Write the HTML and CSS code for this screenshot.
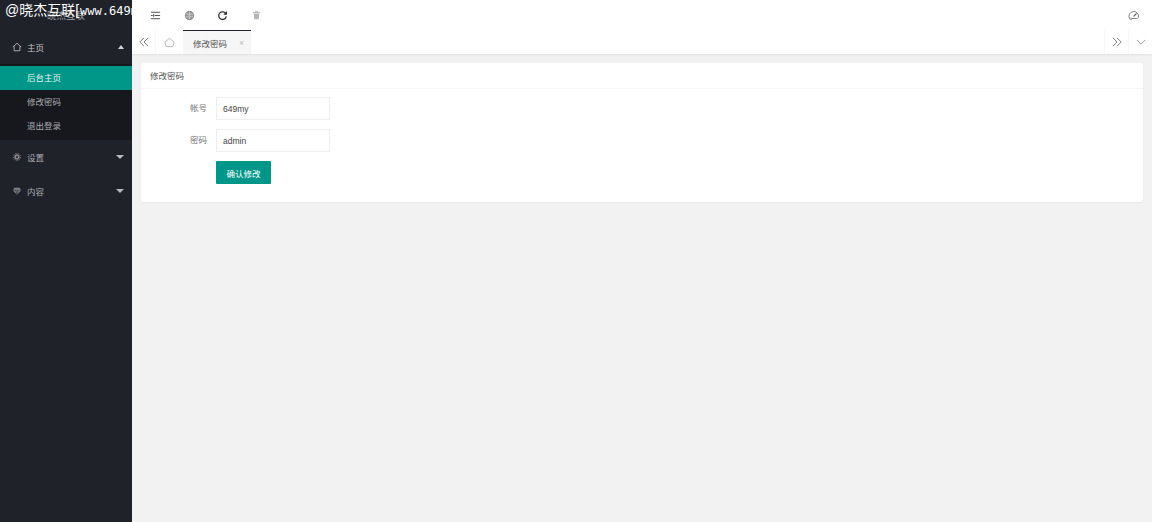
FILE: index.html
```html
<!DOCTYPE html>
<html lang="zh-CN">
<head>
  <meta charset="UTF-8">
  <title>修改密码</title>
  <link rel="stylesheet" href="styles.css">
</head>
<body>
  <aside class="side">
    <div class="logo">晓杰互联</div>
    <div class="watermark">@晓杰互联[<span class="mark-url">www.649m</span></div>
    <ul class="nav">
      <li class="nav-item">
        <svg class="nav-icon" viewBox="0 0 12 12"><path d="M1 6 6 1.500 11 6M2.500 5v5.500h7V5" fill="none" stroke="#c2c2c4" stroke-width="1"/></svg>
        <span>主页</span>
        <i class="arrow up"></i>
      </li>
      <li>
        <ul class="sub">
          <li class="sub-item active">后台主页</li>
          <li class="sub-item">修改密码</li>
          <li class="sub-item">退出登录</li>
        </ul>
      </li>
      <li class="nav-item dim">
        <svg class="nav-icon" viewBox="0 0 12 12"><circle cx="6" cy="6" r="2.200" fill="none" stroke="#85868a" stroke-width="2"/><circle cx="6" cy="6" r="4.400" fill="none" stroke="#85868a" stroke-width="1" stroke-dasharray="1.600 1.400"/></svg>
        <span>设置</span>
        <i class="arrow"></i>
      </li>
      <li class="nav-item dim">
        <svg class="nav-icon" viewBox="0 0 12 12"><path d="M3 2h6l2 3-5 5.500L1 5z" fill="#85868a"/><path d="M1 5h10M4.500 5 6 10l1.500-5" fill="none" stroke="#20222a" stroke-width=".7"/></svg>
        <span>内容</span>
        <i class="arrow"></i>
      </li>
    </ul>
  </aside>

  <div class="main">
    <header class="topbar">
      <div class="tools">
        <svg class="tool" viewBox="0 0 12 12"><path d="M1 2.500h10M1 6h2M5 6h6M1 9.500h10" stroke="#444" stroke-width="1" fill="none"/><path d="M4 4.500v3" stroke="#444" stroke-width="1"/></svg>
        <svg class="tool" viewBox="0 0 12 12"><circle cx="6" cy="6" r="4.600" fill="#999" stroke="#777" stroke-width=".8"/><path d="M2 4.500h8M2 7.500h8M6 2v8" stroke="#ddd" stroke-width=".7"/></svg>
        <svg class="tool" viewBox="0 0 12 12"><path d="M9.800 4.200A4.200 4.200 0 1 0 10.200 7" fill="none" stroke="#333" stroke-width="1.400"/><path d="M11 1v4.200H6.800z" fill="#333"/></svg>
        <svg class="tool" viewBox="0 0 12 12"><path d="M2 3h8M4.500 3V2h3v1" stroke="#aaa" stroke-width="1" fill="none"/><path d="M3 4h6l-.6 6H3.600z" fill="#b5b5b5"/></svg>
      </div>
      <svg class="theme" viewBox="0 0 12 12"><path d="M1.500 9.500a4.800 4.800 0 1 1 9-1.500c0 1-.8 1.500-2 1.500H4" fill="none" stroke="#777" stroke-width=".9"/><path d="m5.500 7.500 3-3" stroke="#666" stroke-width="1.100"/><circle cx="2.800" cy="9.800" r="1" fill="none" stroke="#777" stroke-width=".7"/></svg>
    </header>

    <nav class="tabs">
      <div class="tab-btn left">
        <svg viewBox="0 0 12 12"><path d="M6 1 1 6l5 5M11 1 6 6l5 5" fill="none" stroke="#777" stroke-width="1.100"/></svg>
      </div>
      <div class="tab-home">
        <svg viewBox="0 0 12 12"><path d="M1 5.500 6 1.500l5 4-1.300 5H2.300z" fill="none" stroke="#aaa" stroke-width=".9"/></svg>
      </div>
      <div class="tab">修改密码<span class="tab-x">×</span></div>
      <div class="tab-space"></div>
      <div class="tab-btn">
        <svg viewBox="0 0 12 12"><path d="M1 1l5 5-5 5M6 1l5 5-5 5" fill="none" stroke="#777" stroke-width="1.100"/></svg>
      </div>
      <div class="tab-btn">
        <svg viewBox="0 0 12 12"><path d="M1 3.500 6 8.500l5-5" fill="none" stroke="#888" stroke-width="1"/></svg>
      </div>
    </nav>

    <main class="content">
      <section class="card">
        <div class="card-head">修改密码</div>
        <form class="form">
          <div class="row">
            <label class="label">帐号</label>
            <div class="input">649my</div>
          </div>
          <div class="row">
            <label class="label">密码</label>
            <div class="input">admin</div>
          </div>
          <div class="row">
            <span class="label"></span>
            <button class="btn" type="button">确认修改</button>
          </div>
        </form>
      </section>
    </main>
  </div>
</body>
</html>
```

FILE: styles.css
```css
* {
  margin: 0;
  padding: 0;
  box-sizing: border-box;
}

html, body {
  height: 100%;
  overflow: hidden;
}

body {
  display: flex;
  background: #f2f2f2;
  font-family: "Liberation Sans", "Noto Sans CJK SC", sans-serif;
  font-size: 8.500px;
  color: #555;
}

ul {
  list-style: none;
}

/* Sidebar */
.side {
  position: relative;
  width: 132px;
  flex: none;
  background: #20222a;
  overflow: hidden;
}

.logo {
  height: 30px;
  padding-top: 1px;
  line-height: 30px;
  text-align: center;
  font-size: 9.500px;
  color: #a2a3a6;
}

.watermark {
  position: absolute;
  top: 1px;
  left: 5px;
  font-size: 14px;
  line-height: 18px;
  white-space: nowrap;
  color: #fff;
}

.mark-url {
  font-family: "DejaVu Sans Mono", monospace;
  font-size: 12px;
  margin-left: 1px;
}

.nav-item {
  display: flex;
  align-items: center;
  height: 34px;
  padding: 0 8px 0 12px;
  color: #c2c2c4;
}

.nav-item.dim {
  color: #a9aaad;
}

.nav-icon {
  width: 10px;
  height: 10px;
  margin-right: 5px;
}

.nav-item span {
  flex: 1;
}

.arrow {
  width: 0;
  height: 0;
  border: 4px solid transparent;
  border-top-color: #b9babc;
  border-bottom-width: 0;
}

.arrow.up {
  border-width: 0 3.500px 4px;
  border-color: transparent transparent #d5d5d6;
}

.sub {
  background: #17181d;
  padding: 2px 0;
  height: 76px;
}

.sub-item {
  height: 24px;
  line-height: 25px;
  padding-left: 27px;
  color: #a9aaad;
}

.sub-item.active {
  background: #009688;
  color: #e3f3f1;
}

/* Top */
.main {
  flex: 1;
  min-width: 0;
  display: flex;
  flex-direction: column;
}

.topbar {
  display: flex;
  align-items: center;
  justify-content: space-between;
  height: 30px;
  background: #fff;
  padding: 0 12px 0 18px;
}

.tools {
  display: flex;
  gap: 22.500px;
}

.tool {
  width: 11px;
  height: 11px;
}

.theme {
  width: 12px;
  height: 12px;
}

.tabs {
  display: flex;
  height: 24px;
  background: #fff;
  box-shadow: 0 1px 2px rgba(0, 0, 0, .08);
}

.tab-btn {
  display: flex;
  align-items: center;
  justify-content: center;
  width: 24px;
  border-left: 1px solid #f6f6f6;
}

.tab-btn.left {
  border-left: 0;
  border-right: 1px solid #f6f6f6;
}

.tab-btn svg {
  width: 10px;
  height: 10px;
}

.tab-home {
  display: flex;
  align-items: center;
  justify-content: center;
  width: 27px;
}

.tab-home svg {
  width: 11px;
  height: 11px;
}

.tab {
  display: flex;
  align-items: center;
  width: 68px;
  padding-left: 10px;
  background: #f6f6f6;
  border-top: 1px solid #20222a;
  color: #555;
}

.tab-x {
  margin-left: 12px;
  color: #bbb;
}

.tab-space {
  flex: 1;
}

/* Card */
.content {
  padding: 9px 9px 0;
}

.card {
  background: #fff;
  border-radius: 2px;
  box-shadow: 0 1px 2px rgba(0, 0, 0, .05);
  height: 139px;
}

.card-head {
  height: 26px;
  line-height: 26px;
  padding-left: 9px;
  border-bottom: 1px solid #f6f6f6;
  color: #555;
}

.form {
  padding-top: 8px;
  display: flex;
  flex-direction: column;
  gap: 9px;
}

.row {
  display: flex;
  align-items: center;
}

.label {
  width: 66px;
  padding-bottom: 3px;
  text-align: right;
  color: #777;
}

.input {
  width: 114px;
  height: 23px;
  line-height: 23px;
  margin-left: 9px;
  padding-left: 6px;
  border: 1px solid #eee;
  color: #444;
}

.btn {
  width: 55px;
  height: 23px;
  margin-left: 9px;
  border: 0;
  border-radius: 1px;
  background: #009688;
  color: #fff;
  font: inherit;
}
```
